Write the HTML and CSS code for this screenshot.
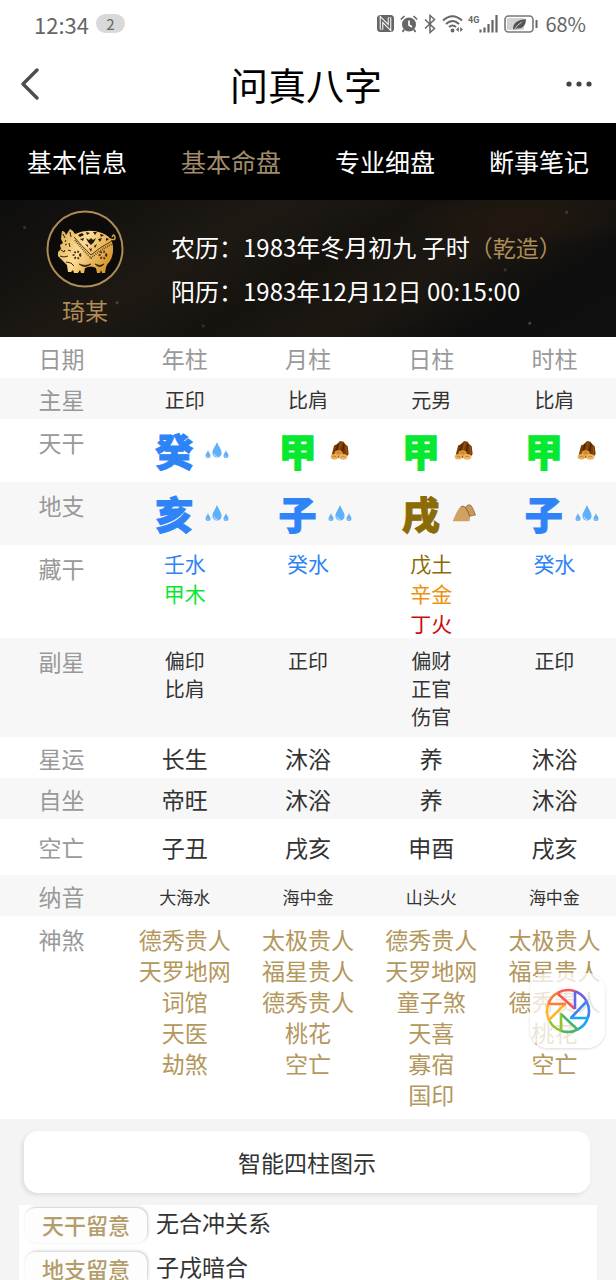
FILE: index.html
```html
<!DOCTYPE html>
<html lang="zh-CN">
<head>
    <meta charset="UTF-8">
    <meta name="viewport" content="width=device-width, initial-scale=1">
    <title>问真八字</title>
    <link rel="stylesheet" href="styles.css">
</head>
<body>
    <!-- shared icons -->
    <svg class="sprite" aria-hidden="true">
        <symbol id="water" viewBox="0 0 24 18">
            <path d="M12 1C10 6 7.400 8.500 7.400 12a4.600 4.600 0 0 0 9.200 0C16.600 8.500 14 6 12 1z" fill="#5fb0fb"/>
            <path d="M9 12.500c.3 2 1.600 3 3.300 3" fill="none" stroke="#d5ecff" stroke-width="1"/>
            <path d="M3 9C2.400 11.500.5 12.500.5 14.500a2.500 2.500 0 0 0 5 0C5.500 12.500 3.500 11.500 3 9zM21 9c-.6 2.500-2.500 3.500-2.500 5.500a2.500 2.500 0 0 0 5 0C23.500 12.500 21.500 11.500 21 9z" fill="#63aef5"/>
            <path d="M2 14.500c.2 1 .8 1.500 1.600 1.500M20 14.500c.2 1 .8 1.500 1.600 1.500" fill="none" stroke="#c4e2fc" stroke-width=".7"/>
        </symbol>
        <symbol id="wood" viewBox="0 0 24 22">
            <path d="M3 16L5.500 6 9 4.500l3-3.500 4 1 1.500 2.500L20.500 7l1 8.500-3 4H5z" fill="#7a3c05"/>
            <path d="M10 4L7.500 13M16.500 4l-2 10" stroke="#4e2300" stroke-width="1.600"/>
            <path d="M13 3l-2 9M19 7.500l.3 8" stroke="#9a5410" stroke-width="1.300"/>
            <ellipse cx="10.500" cy="14.500" rx="4.500" ry="3.200" fill="#dd983c"/>
            <ellipse cx="6" cy="18.500" rx="4.200" ry="3" fill="#e9ad58"/>
            <ellipse cx="15.500" cy="18.500" rx="4.600" ry="3.200" fill="#efb562"/>
            <path d="M8.500 14.500q2-1.500 4 0M4 18.500q2-1.500 4 0M13.500 18.500q2-1.500 4 0" fill="none" stroke="#a9651e" stroke-width=".7"/>
        </symbol>
        <symbol id="earth" viewBox="0 0 24 18">
            <path d="M12 5l3-3.500q2-1.500 4 0 2 2.500 4.500 9.500l-5 1z" fill="#c99a5b" stroke="#8f6a3c" stroke-width=".8"/>
            <path d="M.8 17.200Q5 6 8.500 2.800q2-1.500 4.500.5 3 4 5 10l-.5 3.900z" fill="#cfa263"/>
            <path d="M9 2.600q2-1.500 4.500 1 3 4 4.500 9.400" fill="none" stroke="#7e5c33" stroke-width=".9"/>
        </symbol>
    </svg>

    <div class="status-bar">
        <span class="clock">12:34</span>
        <span class="count">2</span>
        <div class="status-icons">
            <svg width="17" height="18" viewBox="0 0 17 18">
                <rect x="0" y="0" width="17" height="17" rx="3.500" fill="#666"/>
                <path d="M4.500 14.500V4.500L12.500 12.500V2.500" fill="none" stroke="#fff" stroke-width="3.600"/>
                <path d="M4.500 14V4.500L12.500 12.500V3" fill="none" stroke="#666" stroke-width="1.500"/>
            </svg>
            <svg width="18" height="18" viewBox="0 0 18 18">
                <circle cx="9" cy="9.500" r="7" fill="#666"/>
                <path d="M.8 4.500L4.500 1M17.200 4.500L13.500 1M4 14.500L2.500 17M14 14.500l1.500 2.500" stroke="#666" stroke-width="1.700"/>
                <path d="M9 5.500V10l3 2" fill="none" stroke="#fff" stroke-width="1.700"/>
            </svg>
            <svg width="12" height="20" viewBox="0 0 12 20">
                <path d="M1 5.500l9.500 9L6 18.500v-17l4.500 4L1 14.500" fill="none" stroke="#666" stroke-width="1.500"/>
            </svg>
            <svg width="22" height="20" viewBox="0 0 22 20">
                <path d="M1 6.500Q10.500-2 20 6.500M4 10q6.500-6 13 0M7 13q3.500-3 7 0" fill="none" stroke="#666" stroke-width="2"/>
                <circle cx="10.500" cy="16.500" r="1.900" fill="#666"/>
                <path d="M14 15.500l2.800-2.500v5zM21 15.500L18.200 13v5z" fill="#666"/>
            </svg>
            <span class="network">4G</span>
            <svg width="19" height="18" viewBox="0 0 19 18">
                <path d="M1.500 17.500v-3M5.500 17.500v-5M9.500 17.500V9M13.500 17.500V5M17.500 17.500V0" stroke="#666" stroke-width="2.200"/>
            </svg>
            <svg width="35" height="18" viewBox="0 0 35 18">
                <rect x="1" y="1" width="28" height="16" rx="3.500" fill="none" stroke="#777" stroke-width="1.600"/>
                <rect x="3" y="3" width="17" height="12" rx="1.500" fill="#d2d2d2"/>
                <path d="M9 14q0-9 13-10 0 10-9 9.500l-2 1z" fill="#555"/>
                <path d="M10.500 14.500Q13 9.500 18 7" fill="none" stroke="#d2d2d2" stroke-width=".9"/>
                <path d="M32.500 5v8" stroke="#666" stroke-width="2"/>
            </svg>
            <span class="percent">68%</span>
        </div>
    </div>

    <header class="title-bar">
        <button class="icon-button" aria-label="返回">
            <svg width="20" height="32" viewBox="0 0 20 32"><path d="M17 2L3 16l14 14" fill="none" stroke="#4d4d4d" stroke-width="3.400" stroke-linecap="round" stroke-linejoin="round"/></svg>
        </button>
        <h1>问真八字</h1>
        <button class="icon-button" aria-label="更多">
            <svg width="26" height="6" viewBox="0 0 26 6" fill="#444"><circle cx="3" cy="3" r="2.600"/><circle cx="13" cy="3" r="2.600"/><circle cx="23" cy="3" r="2.600"/></svg>
        </button>
    </header>

    <nav class="tabs">
        <a href="#info">基本信息</a>
        <a href="#chart" class="active">基本命盘</a>
        <a href="#detail">专业细盘</a>
        <a href="#notes">断事笔记</a>
    </nav>

    <main>
        <section class="profile">
            <div class="zodiac">
                <svg width="78" height="78" viewBox="0 0 78 78">
                    <defs>
                        <linearGradient id="gold" x1="0" y1="0" x2="1" y2=".5">
                            <stop offset="0" stop-color="#d9a94f"/>
                            <stop offset=".5" stop-color="#ffdc94"/>
                            <stop offset="1" stop-color="#d99a35"/>
                        </linearGradient>
                    </defs>
                    <circle cx="39" cy="39" r="37.500" fill="#0c0b09" stroke="#ad8c55" stroke-width="2"/>
                    <!-- body, head and legs -->
                    <path d="M15 29L16 21Q19 21 20 25L24 19Q28 21 29 24Q42 18 56 23Q64 26 66 32Q69 42 64 51Q61 54 60 57L59 63H56L55 60L54 63H51L50 58Q45 55 39 58L38 63H35L34 60L32 63H28L27 60L25 62H22L21 55L16 50L12 46V42L15 39L14 35L17 33Z" fill="url(#gold)"/>
                    <path d="M64 29Q70 31 69 27T66 27" fill="none" stroke="#d9a94f" stroke-width="1.400"/>
                    <!-- blanket -->
                    <path d="M28 27Q35 35 45 45Q54 37 66 31" fill="none" stroke="#3a2a10" stroke-width=".9"/>
                    <path d="M29 30Q36 39 45 48Q54 40 66 34" fill="none" stroke="#4d3814" stroke-width="2" stroke-dasharray=".8 1.200"/>
                    <path d="M32 25l4-2 2 2-4 2zM40 22l4 1-3 2zM47 22h4l-2 3zM54 24l4 1-3 2zM60 28l3 1-3 2zM34 29l4-1-1 3zM40 28l3 2 2-2 2 2 3-2-2 4-3 3-3-3zM52 29l4-1-2 4zM39 34l3 1v2zM48 36l3-2-2 4zM43 38l2 1 1-1-1 4z" fill="#20170a"/>
                    <!-- flowers -->
                    <g fill="none" stroke="#3b2a0d" stroke-width="2.200" stroke-dasharray="1.500 1.600">
                        <circle cx="31" cy="45" r="3.300"/><circle cx="57" cy="45" r="3.300"/>
                    </g>
                    <path d="M33 54q6 3 12 0-6 5-12 0zM49 54q5 3 9 0-4 5-9 0z" fill="#140f08" stroke="#140f08" stroke-width=".6"/>
                    <path d="M17 24l2 4M24 22l1 5M19 35l2-1M15 40l3 2 1-2M14 46l4 1 4-1M23 33l1 4M20 52l5 1 3 3M20 30l-1 2M22 40l3 1" fill="none" stroke="#33240c" stroke-width="1"/>
                </svg>
                <span>琦某</span>
            </div>
            <div class="birth">
                <p>农历：1983年冬月初九 子时<em>（乾造）</em></p>
                <p>阳历：1983年12月12日 00:15:00</p>
            </div>
        </section>

        <table class="chart" id="chart">
            <thead>
                <tr>
                    <th scope="col">日期</th>
                    <th scope="col">年柱</th>
                    <th scope="col">月柱</th>
                    <th scope="col">日柱</th>
                    <th scope="col">时柱</th>
                </tr>
            </thead>
            <tbody>
                <tr class="star">
                    <th scope="row">主星</th>
                    <td>正印</td>
                    <td>比肩</td>
                    <td>元男</td>
                    <td>比肩</td>
                </tr>
                <tr class="pillar">
                    <th scope="row">天干</th>
                    <td><div class="sign water">癸<svg><use href="#water"/></svg></div></td>
                    <td><div class="sign wood">甲<svg><use href="#wood"/></svg></div></td>
                    <td><div class="sign wood">甲<svg><use href="#wood"/></svg></div></td>
                    <td><div class="sign wood">甲<svg><use href="#wood"/></svg></div></td>
                </tr>
                <tr class="pillar">
                    <th scope="row">地支</th>
                    <td><div class="sign water">亥<svg><use href="#water"/></svg></div></td>
                    <td><div class="sign water">子<svg><use href="#water"/></svg></div></td>
                    <td><div class="sign earth">戌<svg><use href="#earth"/></svg></div></td>
                    <td><div class="sign water">子<svg><use href="#water"/></svg></div></td>
                </tr>
                <tr class="hidden-stems">
                    <th scope="row">藏干</th>
                    <td><span class="water">壬水</span><br><span class="wood">甲木</span></td>
                    <td><span class="water">癸水</span></td>
                    <td><span class="earth">戊土</span><br><span class="metal">辛金</span><br><span class="fire">丁火</span></td>
                    <td><span class="water">癸水</span></td>
                </tr>
                <tr class="sub-star">
                    <th scope="row">副星</th>
                    <td>偏印<br>比肩</td>
                    <td>正印</td>
                    <td>偏财<br>正官<br>伤官</td>
                    <td>正印</td>
                </tr>
                <tr>
                    <th scope="row">星运</th>
                    <td>长生</td>
                    <td>沐浴</td>
                    <td>养</td>
                    <td>沐浴</td>
                </tr>
                <tr>
                    <th scope="row">自坐</th>
                    <td>帝旺</td>
                    <td>沐浴</td>
                    <td>养</td>
                    <td>沐浴</td>
                </tr>
                <tr class="void">
                    <th scope="row">空亡</th>
                    <td>子丑</td>
                    <td>戌亥</td>
                    <td>申酉</td>
                    <td>戌亥</td>
                </tr>
                <tr class="nayin">
                    <th scope="row">纳音</th>
                    <td>大海水</td>
                    <td>海中金</td>
                    <td>山头火</td>
                    <td>海中金</td>
                </tr>
                <tr class="spirits">
                    <th scope="row">神煞</th>
                    <td>德秀贵人<br>天罗地网<br>词馆<br>天医<br>劫煞</td>
                    <td>太极贵人<br>福星贵人<br>德秀贵人<br>桃花<br>空亡</td>
                    <td>德秀贵人<br>天罗地网<br>童子煞<br>天喜<br>寡宿<br>国印</td>
                    <td>太极贵人<br>福星贵人<br>德秀贵人<br>桃花<br>空亡</td>
                </tr>
            </tbody>
        </table>

        <section class="relations">
            <button class="diagram-button">智能四柱图示</button>
            <dl class="notes" id="notes">
                <div><dt>天干留意</dt><dd>无合冲关系</dd></div>
                <div><dt>地支留意</dt><dd>子戌暗合</dd></div>
            </dl>
        </section>
    </main>

    <button class="float-button" aria-label="快捷工具">
        <svg width="46" height="46" viewBox="0 0 46 46" fill="none" stroke-width="2.600">
            <path d="M13 4.600A21 21 0 0 1 30 3.200M12 5l18 16" stroke="#fb554f"/>
            <path d="M30 3.200A21 21 0 0 1 41.400 13M30 3v18" stroke="#6b62e8"/>
            <path d="M41.400 13A21 21 0 0 1 42.800 30M42 13L26 30" stroke="#3e82f4"/>
            <path d="M42.800 30A21 21 0 0 1 33 41.400M43 30H25" stroke="#15a9ef"/>
            <path d="M33 41.400A21 21 0 0 1 16 42.800M33 42L16 26" stroke="#49b56b"/>
            <path d="M16 42.800A21 21 0 0 1 4.600 33M16 43V25" stroke="#8cc52c"/>
            <path d="M4.600 33A21 21 0 0 1 3.200 16M4 32l16-16" stroke="#ffb52b"/>
            <path d="M3.200 16A21 21 0 0 1 13 4.600M3 16h18" stroke="#ff7d35"/>
        </svg>
    </button>
</body>
</html>
```
FILE: styles.css
```css
* {
    box-sizing: border-box;
}
body {
    position: relative;
    display: flex;
    flex-direction: column;
    height: 100vh;
    margin: 0;
    overflow: hidden;
    background: #fff;
    color: #333;
    font-family: "Noto Sans CJK SC", sans-serif;
    font-size: 23px;
    line-height: 32px;
}
button {
    border: 0;
    padding: 0;
    font: inherit;
    color: inherit;
    cursor: pointer;
}
svg {
    display: block;
    flex: none;
}
.sprite {
    position: absolute;
    width: 0;
    height: 0;
}

/* phone status bar */
.status-bar {
    display: flex;
    flex: none;
    align-items: center;
    height: 47px;
    padding: 0 30px 0 34px;
    color: #666;
}
.clock {
    font-size: 22px;
}
.count {
    width: 29px;
    margin-left: 7px;
    border-radius: 10px;
    background: #d9d9d9;
    font-size: 15px;
    line-height: 19px;
    text-align: center;
}
.status-icons {
    display: flex;
    align-items: center;
    gap: 6px;
    margin-left: auto;
}
.network {
    margin: 0 -6px 8px -2px;
    font: bold 9px/12px Roboto, sans-serif;
}
.percent {
    font-size: 20px;
}

.title-bar {
    display: grid;
    flex: none;
    grid-template-columns: 1fr auto 1fr;
    align-items: center;
    height: 76px;
    padding: 0 24px 2px 20px;
}
.title-bar h1 {
    margin: 0;
    color: #000;
    font-size: 38px;
    font-weight: 400;
    line-height: 48px;
}
.icon-button {
    display: flex;
    align-items: center;
    min-height: 44px;
    background: none;
}
.icon-button:last-child {
    justify-self: end;
}

.tabs {
    display: grid;
    flex: none;
    grid-template-columns: repeat(4, 1fr);
    background: #000;
    font-size: 25px;
    line-height: 77px;
    text-align: center;
}
.tabs a {
    color: #fff;
    text-decoration: none;
}
.tabs .active {
    color: #a08c69;
}

main {
    flex: 1;
    min-height: 0;
    overflow-y: auto;
    scrollbar-width: none;
}

/* name and birth date */
.profile {
    display: flex;
    height: 137px;
    padding: 10px 46px;
    background:
        radial-gradient(circle at 19% 75%, #44403a 0 1px, transparent 2px),
        radial-gradient(circle at 92% 9%, #3c3832 0 1px, transparent 2px),
        radial-gradient(circle at 82% 51%, #393733 0 1px, transparent 2px),
        radial-gradient(circle at 86% 90%, #45423e 0 1px, transparent 2px),
        radial-gradient(circle at 4% 20%, #35322e 0 1px, transparent 2px),
        radial-gradient(circle at 33% 92%, #33302c 0 1px, transparent 2px),
        radial-gradient(ellipse at 84% 15%, #22180f 0, transparent 16%),
        linear-gradient(150deg, #0e0e0e 0, #14120f 15%, #1e1913 33%, #16130f 50%, #1d1812 65%, #0e0e0e 82%, #101010 100%);
}
.zodiac {
    display: flex;
    flex-direction: column;
    align-items: center;
    gap: 6px;
    color: #ad8c55;
}
.birth {
    display: flex;
    flex-direction: column;
    gap: 12px;
    margin-left: 47px;
    padding-top: 21px;
    color: #fff;
    font-size: 24px;
    white-space: nowrap;
}
.birth p {
    margin: 0;
}
.birth em {
    color: #ad8c55;
    font-size: 23px;
    font-style: normal;
}

/* four pillars */
.chart {
    width: 100%;
    border-collapse: collapse;
    table-layout: fixed;
    text-align: center;
}
.chart th,
.chart td {
    height: 41px;
    padding: 0;
    white-space: nowrap;
}
.chart th {
    color: #999;
    font-weight: 400;
}
.chart tbody tr:nth-child(odd) {
    background: #f7f7f7;
}
.chart .star td {
    padding-top: 2px;
    font-size: 20px;
}
.chart .pillar th,
.chart .hidden-stems th,
.chart .sub-star th,
.chart .spirits th {
    padding-top: 7px;
    vertical-align: top;
}
.chart .pillar td {
    height: 63px;
    padding-bottom: 2px;
}
.sign {
    display: flex;
    align-items: center;
    justify-content: center;
    gap: 12px;
    padding-left: 15px;
    font-size: 38px;
    font-weight: 900;
    line-height: 60px;
    -webkit-text-stroke: 1px;
}
.sign svg {
    width: 24px;
    height: 20px;
}
.chart .hidden-stems td {
    height: 93px;
    padding-top: 3px;
    font-size: 21px;
    line-height: 30px;
    vertical-align: top;
}
.chart .sub-star td {
    height: 99px;
    padding-top: 9px;
    font-size: 20px;
    line-height: 28px;
    vertical-align: top;
}
.chart .void td {
    height: 56px;
}
.chart .nayin td {
    padding-top: 2px;
    font-size: 17px;
}
.chart .spirits td {
    height: 203px;
    padding-top: 8px;
    color: #b3975c;
    line-height: 31px;
    vertical-align: top;
}
.water {
    color: #2e83f6;
}
.wood {
    color: #07e930;
}
.earth {
    color: #8b6b05;
}
.metal {
    color: #ec920c;
}
.fire {
    color: #cc0b0b;
}

.relations {
    padding: 12px 19px 0;
    background: #f4f4f4;
}
.diagram-button {
    display: block;
    width: calc(100% - 12px);
    height: 62px;
    margin-left: 5px;
    border-radius: 14px;
    background: #fff;
    box-shadow: -2px 2px 4px #ddd;
}
.notes {
    margin: 12px 0 0;
    padding: 3px 6px 12px;
    background: #fff;
}
.notes div {
    display: flex;
    gap: 9px;
    height: 44px;
}
.notes dt {
    width: 122px;
    height: 35px;
    border-radius: 10px;
    background: #fdfdfd;
    box-shadow: 1px -1px 3px #ccc;
    color: #b39d6b;
    font-size: 22px;
    font-weight: 500;
    line-height: 32px;
    text-align: center;
}
.notes dd {
    margin: 0;
    line-height: 28px;
}

.float-button {
    position: absolute;
    right: 11px;
    bottom: 232px;
    display: grid;
    place-items: center;
    width: 75px;
    height: 75px;
    border-radius: 18px;
    background: rgba(255, 255, 255, 0.75);
    box-shadow: 0 1px 3px rgba(0, 0, 0, 0.15);
}
```
